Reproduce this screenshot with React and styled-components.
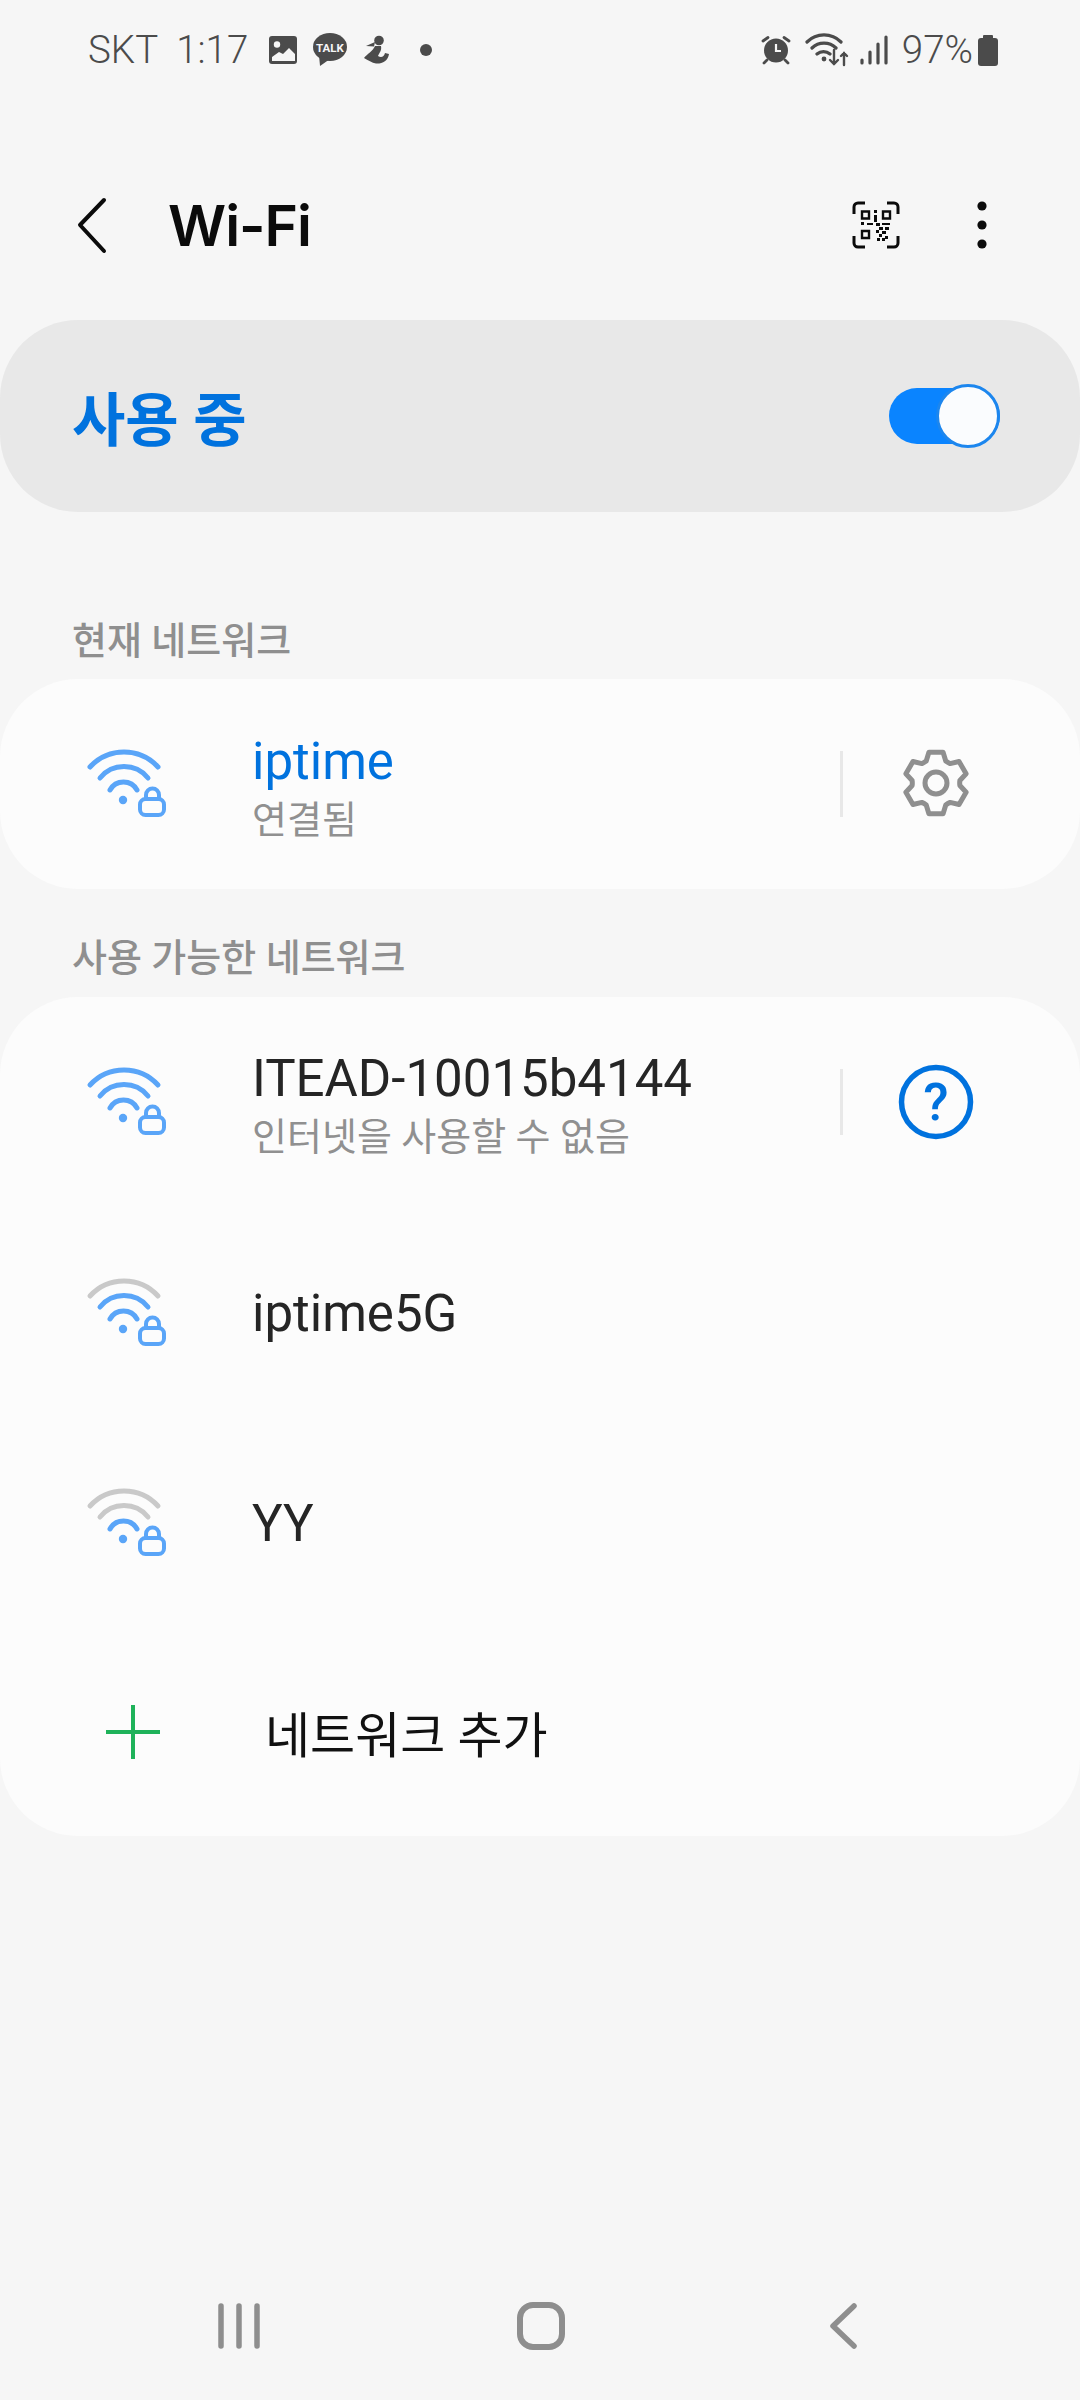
import React from 'react';
import styled, { createGlobalStyle } from 'styled-components';

const Global = createGlobalStyle`
  html, body { margin: 0; padding: 0; background: #f6f6f6; }
  * { box-sizing: border-box; }
`;
const FONT = `Roboto, "Noto Sans CJK KR", sans-serif`;

const Page = styled.div`
  width: 1080px; height: 2400px; background: #f6f6f6; font-family: ${FONT};
  display: flex; flex-direction: column; overflow: hidden;
`;
const StatusBar = styled.div`
  height: 100px; padding: 0 82px 0 88px; display: flex; align-items: center; justify-content: space-between;
  color: #4b4b4b; font-size: 38.5px; line-height: 1; font-weight: 300;
`;
const StatusGroup = styled.div`display: flex; align-items: center;`;
const StatusText = styled.span`margin-right: ${p => p.$gap || 0}px;`;
const Header = styled.div`
  height: 220px; padding: 30px 92px 0 72px; display: flex; align-items: center; 
`;
const Title = styled.h1`
  margin: 0 0 0 60px; font-size: 57px; font-weight: 600; color: #0b0b0b; flex: 1; font-family: Inter, sans-serif; letter-spacing: -1px;
`;
const HeaderActions = styled.div`display: flex; align-items: center; gap: 76px;`;
const MasterCard = styled.div`
  height: 192px; border-radius: 78px; background: #e8e8e8; padding: 0 80px 0 72px;
  display: flex; align-items: center; justify-content: space-between;
`;
const MasterLabel = styled.span`font-size: 58px; font-weight: 700; color: #0072de;`;
const Toggle = styled.div`
  position: relative; width: 111px; height: 56px; border-radius: 28px; background: #0a84ff;
`;
const Knob = styled.div`
  position: absolute; right: 0; top: -4px; width: 64px; height: 64px; border-radius: 50%;
  background: #fafcfe; border: 3px solid #1c86ee;
`;
const SectionLabel = styled.div`
  padding-left: 72px; height: ${p => p.$h}px; display: flex; align-items: flex-end; padding-bottom: ${p => p.$pb}px;
  font-size: 38px; font-weight: 500; color: #8f8f8f; line-height: 1;
`;
const Card = styled.div`background: #fcfcfc; border-radius: 78px; display: flex; flex-direction: column;`;
const Row = styled.div`
  height: ${p => p.$h}px; display: flex; align-items: center; padding-left: 80px;
`;
const RowText = styled.div`flex: 1; margin-left: 82px; padding-top: ${p => p.$pt || 0}px; display: flex; flex-direction: column;`;
const Name = styled.div`font-size: 51px; line-height: 58px; color: ${p => p.$active ? '#0072de' : '#252525'};`;
const Sub = styled.div`font-size: 38px; line-height: 58px; color: #909090;`;
const Divider = styled.div`width: 3px; height: 66px; background: #e8e8e8;`;
const Trail = styled.div`width: 186px; display: flex; justify-content: center;`;
const RowAction = styled.div`width: 240px; display: flex; align-items: center;`;
const AddLabel = styled.div`font-size: 49px; color: #111; margin-left: 95px;`;
const Spacer = styled.div`flex: 1;`;
const NavBar = styled.div`
  height: 130px; display: grid; grid-template-columns: repeat(3, 302px); align-items: center; justify-items: center;
  padding: 0 88px 18px;
`;
const Talk = styled.text`font: 700 11.5px ${FONT}; fill: #f6f6f6;`;
const Question = styled.text`font: 500 52px ${FONT}; fill: #0072de;`;

const Picture = () => (
  <svg width="30" height="30" viewBox="0 0 30 30" style={{ marginLeft: 20 }}>
    <rect width="28" height="28" x="1" y="1" rx="3" fill="#4b4b4b" />
    <circle cx="9" cy="9.5" r="3.2" fill="#f6f6f6" />
    <path d="M4 26v-4l7-5 4 2 6-6 6 6v7z" fill="#f6f6f6" />
  </svg>
);
const TalkIcon = () => (
  <svg width="36" height="34" viewBox="0 0 36 34" style={{ marginLeft: 14 }}>
    <ellipse cx="18" cy="14" rx="17" ry="14" fill="#4b4b4b" />
    <path d="M7 22l1 11 10-7z" fill="#4b4b4b" />
    <Talk x="18" y="18.5" textAnchor="middle">TALK</Talk>
  </svg>
);
const Runner = () => (
  <svg width="30" height="32" viewBox="0 0 30 32" style={{ marginLeft: 14 }}>
    <circle cx="17" cy="6.5" r="4.8" fill="#4b4b4b" />
    <path d="M13 8L4 12l8 0.5zM13 12h6c1 5-2 7-3 10 3 2 6 1 7-3l4 1c-1 7-7 10-13 9.5C10 29 6 26 2 24c3-4 9-7 11-12z" fill="#4b4b4b" />
  </svg>
);
const Alarm = () => (
  <svg width="30" height="30" viewBox="0 0 30 30" style={{ marginRight: 14 }}>
    <circle cx="15" cy="15.5" r="12" fill="#4b4b4b" />
    <path d="M15 9v7h5" fill="none" stroke="#f6f6f6" strokeWidth="2.2" />
    <path d="M2 6l5-3.5M28 6l-5-3.5M6 25l-3 3M24 25l3 3" stroke="#4b4b4b" strokeWidth="2.8" strokeLinecap="round" />
  </svg>
);
const StatusWifi = () => (
  <svg width="44" height="34" viewBox="0 0 44 34" style={{ marginRight: 10 }}>
    <g fill="none" stroke="#4b4b4b" strokeWidth="3.2" strokeLinecap="round">
      <path d="M2 9A24 24 0 0 1 36 9M7 15a17 17 0 0 1 24 0M12 21a10 10 0 0 1 13 0" />
      <path d="M29 17v14M25 27l4 4 4-4M39 32V20M36 23l3-3 3 3" strokeWidth="2.4" />
    </g>
    <circle cx="19" cy="26" r="2.4" fill="#4b4b4b" />
  </svg>
);
const Signal = () => (
  <svg width="29" height="30" viewBox="0 0 29 30" style={{ marginRight: 14 }}>
    <path d="M3 28v-3M11 28V17M19 28V9M27 28V2" stroke="#4b4b4b" strokeWidth="3.2" strokeLinecap="round" />
  </svg>
);
const Battery = () => (
  <svg width="20" height="31" viewBox="0 0 20 31" style={{ marginLeft: 5 }}>
    <rect x="0" y="3" width="20" height="28" rx="3" fill="#4b4b4b" />
    <rect x="5" y="0" width="10" height="5" rx="1" fill="#4b4b4b" />
  </svg>
);
const Back = () => (
  <svg width="36" height="60" viewBox="0 0 36 60">
    <path d="M32 5L8 30l24 26" fill="none" stroke="#0b0b0b" strokeWidth="4" strokeLinecap="round" strokeLinejoin="round" />
  </svg>
);
const Qr = () => (
  <svg width="48" height="48" viewBox="0 0 48 48">
    <g fill="none" stroke="#0b0b0b">
      <path d="M2 13V6a4 4 0 0 1 4-4h7M35 2h7a4 4 0 0 1 4 4v7M46 35v7a4 4 0 0 1-4 4h-7M13 46H6a4 4 0 0 1-4-4v-7" strokeWidth="3" />
      <path d="M10 10.5h7v7h-7zM31 10.5h7v7h-7zM10 30h7v7h-7z" strokeWidth="2.4" />
    </g>
    <path fill="#0b0b0b" d="M22 9h3v3h-3zM22 14h3v7h-3zM9 21h3v3H9zM15 22h6v2h-6zM24 22h4v3h-4zM30 22h8v2h-8zM27 26h4v3h-4zM33 26h4v3h-4zM24 29h3v3h-3zM30 30h4v3h-4zM27 33h3v3h-3zM33 35h3v3h-3zM25 37h3v3h-3zM30 37h3v3h-3z" />
  </svg>
);
const Dots = () => (
  <svg width="12" height="52" viewBox="0 0 12 52">
    <circle cx="6" cy="7" r="4.6" fill="#0b0b0b" />
    <circle cx="6" cy="26" r="4.6" fill="#0b0b0b" />
    <circle cx="6" cy="45" r="4.6" fill="#0b0b0b" />
  </svg>
);
const BLUE = '#5aa5f8', GREY = '#c9c9c9';
const WifiLock = ({ level }) => (
  <svg width="90" height="80" viewBox="0 0 90 80">
    <g fill="none" strokeWidth="5" strokeLinecap="round">
      <path d="M10 23A46 46 0 0 1 78 23" stroke={level >= 3 ? BLUE : GREY} />
      <path d="M20 34A31 31 0 0 1 68 34" stroke={level >= 2 ? BLUE : GREY} />
      <path d="M30 46A15.4 15.4 0 0 1 57 46" stroke={BLUE} />
    </g>
    <circle cx="43" cy="56" r="4.2" fill={BLUE} />
    <path d="M66 56v-5a6.5 6.5 0 0 1 13 0v5" fill="none" stroke={BLUE} strokeWidth="4" />
    <rect x="60" y="55" width="24" height="16" rx="5.5" fill="#fcfcfc" stroke={BLUE} strokeWidth="4" />
  </svg>
);
const gearPath = () => {
  const pt = (r, deg) => {
    const a = (deg - 90) * Math.PI / 180;
    return `${(36 + r * Math.cos(a)).toFixed(2)} ${(36 + r * Math.sin(a)).toFixed(2)}`;
  };
  let d = '';
  for (let i = 0; i < 6; i++) {
    const c = i * 60;
    d += `${i ? 'L' : 'M'}${pt(24, c - 24)} L${pt(31.5, c - 13)} L${pt(31.5, c + 13)} L${pt(24, c + 24)} Q${pt(23.5, c + 30)} ${pt(24, c + 36)} `;
  }
  return d + 'Z';
};
const Gear = () => (
  <svg width="72" height="72" viewBox="0 0 72 72" style={{ marginTop: -2 }}>
    <path d={gearPath()} fill="none" stroke="#8f8f8f" strokeWidth="5" strokeLinejoin="round" />
    <circle cx="36" cy="36" r="11" fill="none" stroke="#8f8f8f" strokeWidth="5" />
  </svg>
);
const Help = () => (
  <svg width="76" height="76" viewBox="0 0 76 76">
    <circle cx="38" cy="38" r="34.5" fill="none" stroke="#0072de" strokeWidth="5.5" />
    <Question x="38" y="56" textAnchor="middle">?</Question>
  </svg>
);
const Plus = () => (
  <svg width="90" height="60" viewBox="0 0 90 60">
    <path d="M26 30h54M53 3v54" stroke="#1fb25a" strokeWidth="4" />
  </svg>
);
const NavRecent = () => (
  <svg width="46" height="46" viewBox="0 0 46 46">
    <path d="M5 3v40M23 3v40M41 3v40" stroke="#8e8e8e" strokeWidth="5.5" strokeLinecap="round" />
  </svg>
);
const NavHome = () => (
  <svg width="50" height="50" viewBox="0 0 50 50">
    <rect x="4" y="4" width="42" height="42" rx="13" fill="none" stroke="#8e8e8e" strokeWidth="6" />
  </svg>
);
const NavBack = () => (
  <svg width="30" height="46" viewBox="0 0 30 46">
    <path d="M26 3L5 23l21 20" fill="none" stroke="#8e8e8e" strokeWidth="5.5" strokeLinecap="round" strokeLinejoin="round" />
  </svg>
);

export default function App() {
  return (
    <Page>
      <Global />
      <StatusBar>
        <StatusGroup>
          <StatusText $gap={18}>SKT</StatusText>
          <StatusText>1:17</StatusText>
          <Picture /><TalkIcon /><Runner />
          <svg width="14" height="14" viewBox="0 0 14 14" style={{ marginLeft: 27 }}><circle cx="7" cy="7" r="6" fill="#4b4b4b" /></svg>
        </StatusGroup>
        <StatusGroup>
          <Alarm /><StatusWifi /><Signal />
          <StatusText>97%</StatusText>
          <Battery />
        </StatusGroup>
      </StatusBar>
      <Header>
        <Back />
        <Title>Wi-Fi</Title>
        <HeaderActions><Qr /><Dots /></HeaderActions>
      </Header>
      <MasterCard>
        <MasterLabel>사용 중</MasterLabel>
        <Toggle><Knob /></Toggle>
      </MasterCard>
      <SectionLabel $h={167} $pb={19}>현재 네트워크</SectionLabel>
      <Card>
        <Row $h={210}>
          <WifiLock level={3} />
          <RowText $pt={13}><Name $active>iptime</Name><Sub>연결됨</Sub></RowText>
          <RowAction><Divider /><Trail><Gear /></Trail></RowAction>
        </Row>
      </Card>
      <SectionLabel $h={108} $pb={20}>사용 가능한 네트워크</SectionLabel>
      <Card>
        <Row $h={210}>
          <WifiLock level={3} />
          <RowText $pt={12}><Name>ITEAD-10015b4144</Name><Sub>인터넷을 사용할 수 없음</Sub></RowText>
          <RowAction><Divider /><Trail><Help /></Trail></RowAction>
        </Row>
        <Row $h={212}><WifiLock level={2} /><RowText $pt={2}><Name>iptime5G</Name></RowText></Row>
        <Row $h={208}><WifiLock level={1} /><RowText $pt={2}><Name>YY</Name></RowText></Row>
        <Row $h={209}><Plus /><AddLabel>네트워크 추가</AddLabel></Row>
      </Card>
      <Spacer />
      <NavBar><NavRecent /><NavHome /><NavBack /></NavBar>
    </Page>
  );
}
